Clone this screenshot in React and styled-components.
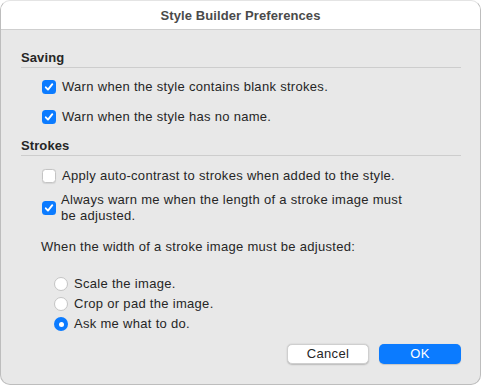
import React from "react";
import styled, { createGlobalStyle } from "styled-components";

const Global = createGlobalStyle`
  html, body {
    margin: 0;
    padding: 0;
    background: #ffffff;
  }
  body {
    font-family: "Liberation Sans", Arial, sans-serif;
    -webkit-font-smoothing: antialiased;
  }
`;

const Window = styled.div`
  width: 481px;
  height: 385px;
  box-sizing: border-box;
  border: 1px solid #bdbdbd;
  border-top-color: #e4e4e4;
  border-radius: 10px;
  background: #e8e8e8;
  overflow: hidden;
  display: flex;
  flex-direction: column;
`;

const TitleBar = styled.div`
  height: 27px;
  flex: none;
  background: #ffffff;
  border-bottom: 1px solid #cfcfcf;
  display: flex;
  align-items: center;
  justify-content: center;
  font-size: 13px;
  font-weight: bold;
  letter-spacing: 0.1px;
  color: #4a4a4a;
  padding-top: 1px;
`;

const Body = styled.div`
  flex: 1;
  padding: 20px 19px 20px 20px;
  display: flex;
  flex-direction: column;
  color: #262626;
  font-size: 13px;
  line-height: 16px;
  letter-spacing: 0.3px;
`;

const SectionHeader = styled.div`
  font-weight: bold;
  color: #262626;
  letter-spacing: 0.1px;
  padding-bottom: 1px;
  border-bottom: 1px solid #cdcdcd;
  margin-top: ${(p) => p.$top || 0}px;
`;

const Row = styled.label`
  display: flex;
  align-items: center;
  gap: ${(p) => p.$gap || 6}px;
  padding-left: ${(p) => p.$indent || 21}px;
  margin-top: ${(p) => p.$top || 0}px;
`;

const Box = styled.span`
  width: 14px;
  height: 14px;
  flex: none;
  box-sizing: border-box;
  border-radius: 3.5px;
  display: flex;
  align-items: center;
  justify-content: center;
  background: ${(p) => (p.$on ? "#0b7bff" : "#ffffff")};
  border: ${(p) => (p.$on ? "none" : "1px solid #c4c4c4")};
  box-shadow: ${(p) => (p.$on ? "none" : "0 0.5px 1px rgba(0,0,0,0.08)")};
`;

const Dot = styled.span`
  width: 14px;
  height: 14px;
  flex: none;
  box-sizing: border-box;
  border-radius: 50%;
  display: flex;
  align-items: center;
  justify-content: center;
  background: ${(p) => (p.$on ? "#0b7bff" : "#ffffff")};
  border: ${(p) => (p.$on ? "none" : "1px solid #c4c4c4")};
  &::after {
    content: "";
    display: ${(p) => (p.$on ? "block" : "none")};
    width: 5px;
    height: 5px;
    border-radius: 50%;
    background: #ffffff;
  }
`;

const Note = styled.div`
  padding-left: 20px;
  margin-top: 15px;
`;

const RadioGroup = styled.div`
  display: flex;
  flex-direction: column;
  gap: 4px;
  margin-top: 21px;
`;

const Buttons = styled.div`
  margin-top: auto;
  display: flex;
  justify-content: flex-end;
  gap: 10px;
`;

const Button = styled.button`
  width: 82px;
  height: 20px;
  border-radius: 5px;
  font-family: inherit;
  font-size: 13px;
  line-height: 16px;
  letter-spacing: 0.3px;
  padding: 0;
  border: ${(p) => (p.$primary ? "none" : "0.5px solid #cfcfcf")};
  background: ${(p) => (p.$primary ? "#0b7bff" : "#ffffff")};
  color: ${(p) => (p.$primary ? "#ffffff" : "#262626")};
  box-shadow: ${(p) => (p.$primary ? "0 0.5px 1px rgba(0,0,0,0.15)" : "0 0.5px 1.5px rgba(0,0,0,0.2)")};
`;

function Checkbox({ checked }) {
  return (
    <Box $on={checked}>
      {checked && (
        <svg width="10" height="10" viewBox="0 0 10 10">
          <path d="M1.8 5.3 L4 7.6 L8.3 2.2" fill="none" stroke="#fff" strokeWidth="1.9" strokeLinecap="round" strokeLinejoin="round" />
        </svg>
      )}
    </Box>
  );
}

export default function App() {
  return (
    <>
      <Global />
      <Window>
        <TitleBar>Style Builder Preferences</TitleBar>
        <Body>
          <SectionHeader>Saving</SectionHeader>
          <Row $top={11}>
            <Checkbox checked />
            <span>Warn when the style contains blank strokes.</span>
          </Row>
          <Row $top={14}>
            <Checkbox checked />
            <span>Warn when the style has no name.</span>
          </Row>

          <SectionHeader $top={13}>Strokes</SectionHeader>
          <Row $top={12}>
            <Checkbox />
            <span>Apply auto-contrast to strokes when added to the style.</span>
          </Row>
          <Row $top={8} $gap={5}>
            <Checkbox checked />
            <span>
              Always warn me when the length of a stroke image must
              <br />
              be adjusted.
            </span>
          </Row>

          <Note>When the width of a stroke image must be adjusted:</Note>
          <RadioGroup>
            <Row $indent={33}>
              <Dot />
              <span>Scale the image.</span>
            </Row>
            <Row $indent={33}>
              <Dot />
              <span>Crop or pad the image.</span>
            </Row>
            <Row $indent={33}>
              <Dot $on />
              <span>Ask me what to do.</span>
            </Row>
          </RadioGroup>

          <Buttons>
            <Button>Cancel</Button>
            <Button $primary>OK</Button>
          </Buttons>
        </Body>
      </Window>
    </>
  );
}
